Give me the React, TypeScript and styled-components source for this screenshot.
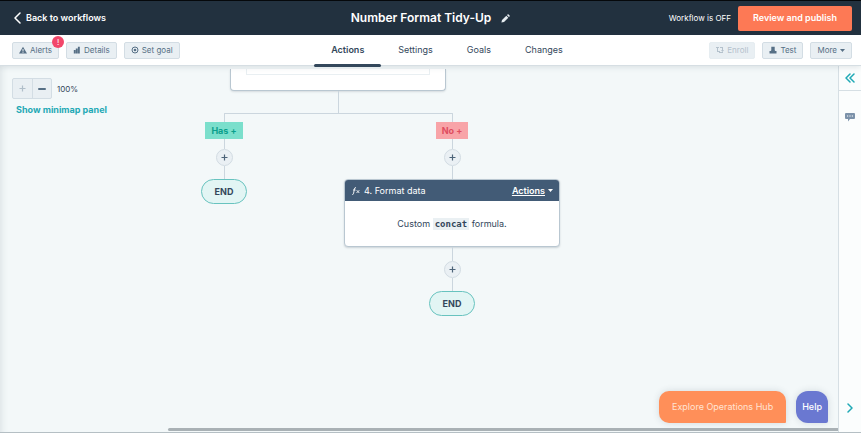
import React from "react";
import styled, { createGlobalStyle, css } from "styled-components";

const ink = "#33475b";
const line = "#cbd6de";
const teal = "#1fa9b5";

const GlobalStyle = createGlobalStyle`
  * { box-sizing: border-box; }
  body { margin: 0; }
  body, button {
    font-family: "Inter", "Liberation Sans", sans-serif;
    font-size: 8px;
    line-height: 12px;
    color: ${ink};
  }
  button {
    margin: 0;
    padding: 0;
    border: 0;
    background: none;
    white-space: nowrap;
  }
  a { color: inherit; text-decoration: none; }
  svg { display: block; flex: none; }
`;

const Page = styled.div`
  display: flex;
  flex-direction: column;
  height: 100vh;
  border-top: 1px solid #05080b;
  border-bottom: 1px solid #b5bfc4;
  overflow: hidden;
`;

const Header = styled.header`
  display: grid;
  grid-template-columns: 1fr auto 1fr;
  align-items: center;
  flex: none;
  height: 34px;
  padding: 0 9px 0 14px;
  background: #22313f;
  color: #fff;
`;

const BackLink = styled.a`
  display: flex;
  align-items: center;
  gap: 5px;
  font-size: 9px;
  font-weight: 600;
`;

const TitleGroup = styled.div`
  display: flex;
  align-items: center;
  gap: 10px;
  padding-right: 5px;
`;

const Title = styled.h1`
  margin: 0;
  font-size: 12px;
  line-height: 16px;
  font-weight: 600;
`;

const HeaderEnd = styled.div`
  display: flex;
  align-items: center;
  justify-content: flex-end;
  gap: 7px;
`;

const PublishButton = styled.button`
  height: 25px;
  padding: 0 15px;
  border-radius: 2px;
  background: #fd7955;
  color: #fff;
  font-size: 9px;
  font-weight: 600;
`;

const Toolbar = styled.div`
  display: grid;
  grid-template-columns: 1fr auto 1fr;
  flex: none;
  height: 31px;
  padding: 0 9px 0 12px;
  background: #fff;
  border-bottom: 1px solid #d6dee3;
  box-shadow: 0 1px 6px rgba(45, 62, 80, 0.14);
  z-index: 1;
`;

const ToolGroup = styled.div<{ $end?: boolean }>`
  display: flex;
  align-items: center;
  gap: 7px;
  justify-content: ${(p) => (p.$end ? "flex-end" : "flex-start")};
`;

const ToolButton = styled.button`
  position: relative;
  display: flex;
  align-items: center;
  gap: 3px;
  height: 17px;
  padding: 0 6px;
  border: 1px solid #d3dde4;
  border-radius: 2px;
  background: #e9eff3;
  color: #566f85;
  &:disabled { color: #b4c1cc; border-color: #e6edf1; }
`;

const AlertBadge = styled.span`
  position: absolute;
  top: -7px;
  right: -6px;
  width: 12px;
  height: 12px;
  border-radius: 50%;
  background: #f2476a;
  color: #fff;
  text-align: center;
`;

const Tabs = styled.nav`
  display: flex;
  padding-left: 30px;
`;

const Tab = styled.a<{ $active?: boolean }>`
  position: relative;
  display: flex;
  align-items: center;
  padding: 0 17px;
  font-size: 9px;
  ${(p) =>
    p.$active &&
    css`
      font-weight: 600;
      &::after {
        content: "";
        position: absolute;
        left: 0;
        right: 0;
        bottom: -2px;
        height: 3px;
        border-radius: 2px;
        background: ${ink};
      }
    `}
`;

const Body = styled.div`
  display: flex;
  flex: 1;
  min-height: 0;
`;

const Canvas = styled.main`
  position: relative;
  flex: 1;
  min-width: 0;
  overflow: hidden;
  background: #f3f8f9;
  box-shadow: inset 8px 0 8px -8px rgba(45, 62, 80, 0.16);
`;

const CanvasControls = styled.div`
  position: absolute;
  top: 12px;
  left: 12px;
`;

const ZoomRow = styled.div`
  display: flex;
  align-items: center;
  gap: 5px;
`;

const ZoomButtons = styled.div`
  display: flex;
  border: 1px solid #d3dde4;
  border-radius: 2px;
  background: #e9eff3;
`;

const ZoomButton = styled.button`
  display: grid;
  place-items: center;
  width: 19px;
  height: 19px;
  color: #566f85;
  &:disabled { color: #b0bec9; }
  & + & { border-left: 1px solid #d3dde4; }
`;

const MinimapButton = styled.button`
  margin: 5px 4px;
  color: ${teal};
  font-size: 9px;
  font-weight: 700;
`;

const Tree = styled.div`
  width: 456px;
  margin-left: 110px;
  padding-top: 3px;
  display: flex;
  flex-direction: column;
  align-items: center;
`;

const ParentCard = styled.section`
  width: 216px;
  height: 22px;
  padding: 0 15px;
  background: #fff;
  border: 1px solid #b9c7d1;
  border-top: 0;
  border-radius: 0 0 4px 4px;
  box-shadow: 0 1px 2px rgba(45, 62, 80, 0.15);
`;

const ParentField = styled.div`
  height: 6px;
  border: 1px solid #e9eff2;
  border-top: 0;
`;

const Stem = styled.div<{ $length: number }>`
  width: 1px;
  height: ${(p) => p.$length}px;
  background: ${line};
`;

const Fork = styled.div`
  width: 229px;
  height: 9px;
  border: 1px solid ${line};
  border-bottom: 0;
  border-radius: 1px 1px 0 0;
`;

const Branches = styled.div`
  display: grid;
  grid-template-columns: 1fr 1fr;
  width: 100%;
`;

const Branch = styled.div`
  display: flex;
  flex-direction: column;
  align-items: center;
`;

const BranchLabel = styled.button<{ $kind: "has" | "no" }>`
  height: 17px;
  padding: 0 6px;
  font-size: 9px;
  font-weight: 700;
  background: ${(p) => (p.$kind === "has" ? "#7bdfcc" : "#f8a4a8")};
  color: ${(p) => (p.$kind === "has" ? "#0ba08c" : "#df4d5f")};
`;

const AddButton = styled.button`
  display: grid;
  place-items: center;
  width: 17px;
  height: 17px;
  border: 1px solid #d2dce3;
  border-radius: 50%;
  background: #eaf0f4;
  color: #4d6479;
`;

const EndNode = styled.div`
  display: grid;
  place-items: center;
  width: 46px;
  height: 25px;
  border: 1px solid #68c3bf;
  border-radius: 13px;
  background: #e2f5f4;
  font-size: 9px;
  font-weight: 700;
`;

const ActionCard = styled.section`
  width: 216px;
  border: 1px solid #b9c7d1;
  border-radius: 4px;
  background: #fff;
  box-shadow: 0 1px 2px rgba(45, 62, 80, 0.2);
  overflow: hidden;
`;

const ActionHeader = styled.header`
  display: flex;
  align-items: center;
  height: 21px;
  padding: 0 6px 0 7px;
  gap: 4px;
  background: #425b76;
  color: #fff;
  font-size: 9px;
`;

const ActionTitle = styled.h2`
  flex: 1;
  margin: 0;
  font-size: 9px;
  font-weight: 400;
`;

const ActionsMenu = styled.button`
  display: flex;
  align-items: center;
  gap: 3px;
  color: #fff;
  font-size: 9px;
  font-weight: 600;
  span { text-decoration: underline; }
`;

const ActionBody = styled.p`
  margin: 0;
  padding: 16px 8px 15px;
  text-align: center;
  font-size: 9px;
  line-height: 13px;
`;

const Code = styled.code`
  padding: 1px 2px;
  background: #eaf0f3;
  font-family: "DejaVu Sans Mono", monospace;
  font-size: 9px;
  font-weight: 700;
`;

const Floating = styled.div`
  position: absolute;
  right: 10px;
  bottom: 9px;
  display: flex;
  gap: 10px;
`;

const FloatButton = styled.button<{ $help?: boolean }>`
  height: 32px;
  padding: 0 ${(p) => (p.$help ? 6 : 13)}px;
  border-radius: ${(p) => (p.$help ? "12px 12px 2px 12px" : "10px 10px 1px 10px")};
  background: ${(p) => (p.$help ? "#6a78d1" : "#ff8f59")};
  color: ${(p) => (p.$help ? "#fff" : "#ffe3d3")};
  box-shadow: 0 0 7px rgba(45, 62, 80, 0.16);
  font-size: 9px;
  font-weight: ${(p) => (p.$help ? 500 : 400)};
`;

const ScrollThumb = styled.div`
  position: absolute;
  left: 20%;
  right: 0;
  bottom: 1px;
  height: 3px;
  border-radius: 2px 0 0 2px;
  background: #a9b1b5;
`;

const Rail = styled.aside`
  display: flex;
  flex-direction: column;
  align-items: center;
  justify-content: space-between;
  width: 23px;
  flex: none;
  padding-bottom: 14px;
  border-left: 1px solid #d6dfe4;
  background: #fbfdfd;
`;

const RailTop = styled.div`
  align-self: stretch;
  display: flex;
  flex-direction: column;
  gap: 17px;
`;

const RailButton = styled.button<{ $ruled?: boolean }>`
  display: grid;
  place-items: center;
  padding: 5px;
  color: ${teal};
  ${(p) =>
    p.$ruled &&
    css`
      height: 25px;
      border-bottom: 1px solid #d6dfe4;
    `}
`;

const Chevron = ({ w = 6, h = 10, d = "M5 1 1 5l4 4", stroke = 1.5 }) => (
  <svg width={w} height={h} viewBox={`0 0 ${w} ${h}`} fill="none" stroke="currentColor" strokeWidth={stroke} strokeLinecap="round" strokeLinejoin="round" aria-hidden="true">
    <path d={d} />
  </svg>
);

const Plus = () => (
  <svg width="7" height="7" viewBox="0 0 7 7" stroke="currentColor" strokeWidth="1.2" aria-hidden="true">
    <path d="M3.5 .5v6M.5 3.5h6" />
  </svg>
);

const Caret = () => (
  <svg width="5" height="3" viewBox="0 0 5 3" fill="currentColor" aria-hidden="true">
    <path d="M0 0h5L2.5 3z" />
  </svg>
);

const Glyph = ({ children }: { children: React.ReactNode }) => (
  <svg width="8" height="8" viewBox="0 0 8 8" fill="currentColor" aria-hidden="true">
    {children}
  </svg>
);

const AddStep = () => (
  <AddButton aria-label="Add action">
    <Plus />
  </AddButton>
);

export default function App() {
  return (
    <>
      <GlobalStyle />
      <Page>
        <Header>
          <BackLink href="#workflows">
            <Chevron w={7} h={12} d="M6 1 1 6l5 5" />
            Back to workflows
          </BackLink>
          <TitleGroup>
            <Title>Number Format Tidy-Up</Title>
            <button aria-label="Rename workflow">
              <svg width="9" height="9" viewBox="0 0 9 9" fill="#e6ecf0" aria-hidden="true">
                <path d="M.4 8.6 1 6l4.3-4.3 2 2L3 8zM5.9 1.1l.7-.7q.5-.4 1 0l1 1q.4.5 0 1l-.7.7z" />
              </svg>
            </button>
          </TitleGroup>
          <HeaderEnd>
            <span>Workflow is OFF</span>
            <PublishButton>Review and publish</PublishButton>
          </HeaderEnd>
        </Header>

        <Toolbar>
          <ToolGroup>
            <ToolButton>
              <Glyph><path fillRule="evenodd" d="M4 .7 8 7.5H0zM3.5 3v2.2h1V3zm0 2.8v.9h1v-.9z" /></Glyph>
              Alerts
              <AlertBadge>!</AlertBadge>
            </ToolButton>
            <ToolButton>
              <Glyph><path d="M.8 4h1.800v3.500H.8zM2.800 2.500h1.900v5H2.800zM4.900 .8h1.900v6.700H4.900z" /></Glyph>
              Details
            </ToolButton>
            <ToolButton>
              <Glyph>
                <circle cx="4" cy="4" r="3" fill="none" stroke="currentColor" />
                <circle cx="4" cy="4" r="1.3" />
              </Glyph>
              Set goal
            </ToolButton>
          </ToolGroup>
          <Tabs>
            <Tab href="#actions" $active aria-current="page">Actions</Tab>
            <Tab href="#settings">Settings</Tab>
            <Tab href="#goals">Goals</Tab>
            <Tab href="#changes">Changes</Tab>
          </Tabs>
          <ToolGroup $end>
            <ToolButton disabled>
              <Glyph><path d="M0 1h3v1H2v3h2v1H1V2H0zM4 1h3v3h1L6.5 6 5 4h1V2H4zM3 6h4v1H3z" /></Glyph>
              Enroll
            </ToolButton>
            <ToolButton>
              <Glyph><path d="M2.300 .8h3.400v3.400l.6.8H7.500v2.400H.5V5h1.200l.6-.8z" /></Glyph>
              Test
            </ToolButton>
            <ToolButton>
              More
              <Caret />
            </ToolButton>
          </ToolGroup>
        </Toolbar>

        <Body>
          <Canvas>
            <Tree>
              <ParentCard>
                <ParentField />
              </ParentCard>
              <Stem $length={22} />
              <Fork />
              <Branches>
                <Branch>
                  <BranchLabel $kind="has">Has +</BranchLabel>
                  <Stem $length={10} />
                  <AddStep />
                  <Stem $length={13} />
                  <EndNode>END</EndNode>
                </Branch>
                <Branch>
                  <BranchLabel $kind="no">No +</BranchLabel>
                  <Stem $length={10} />
                  <AddStep />
                  <Stem $length={13} />
                  <ActionCard>
                    <ActionHeader>
                      <svg width="8" height="8" viewBox="0 0 8 8" fill="none" stroke="currentColor" strokeWidth=".9" aria-hidden="true">
                        <path d="M.3 7.5q1 .2 1.3-1.3L2.4 2Q2.7 .3 4 .7M1 3h2.6M4.700 3.2 7.3 6M7.3 3.2 4.5 6" />
                      </svg>
                      <ActionTitle>4. Format data</ActionTitle>
                      <ActionsMenu>
                        <span>Actions</span>
                        <Caret />
                      </ActionsMenu>
                    </ActionHeader>
                    <ActionBody>
                      Custom <Code>concat</Code> formula.
                    </ActionBody>
                  </ActionCard>
                  <Stem $length={14} />
                  <AddStep />
                  <Stem $length={13} />
                  <EndNode>END</EndNode>
                </Branch>
              </Branches>
            </Tree>

            <CanvasControls>
              <ZoomRow>
                <ZoomButtons>
                  <ZoomButton disabled aria-label="Zoom in"><Plus /></ZoomButton>
                  <ZoomButton aria-label="Zoom out">
                    <svg width="8" height="2" viewBox="0 0 8 2" fill="currentColor" aria-hidden="true"><rect width="8" height="2" rx="1" /></svg>
                  </ZoomButton>
                </ZoomButtons>
                <span>100%</span>
              </ZoomRow>
              <MinimapButton>Show minimap panel</MinimapButton>
            </CanvasControls>

            <Floating>
              <FloatButton>Explore Operations Hub</FloatButton>
              <FloatButton $help>Help</FloatButton>
            </Floating>
            <ScrollThumb />
          </Canvas>
          <Rail>
            <RailTop>
              <RailButton $ruled aria-label="Expand panel">
                <Chevron w={10} h={10} d="M5 1 1 5l4 4M9 1 5 5l4 4" />
              </RailButton>
              <RailButton aria-label="Comments">
                <svg width="10" height="9" viewBox="0 0 10 9" aria-hidden="true">
                  <path d="M1 0h8q1 0 1 1v4q0 1-1 1H5L3 8.5V6H1Q0 6 0 5V1q0-1 1-1z" fill="#7c92aa" />
                  <path d="M2 3h1.2M4.4 3h1.2M6.8 3H8" stroke="#fff" />
                </svg>
              </RailButton>
            </RailTop>
            <RailButton aria-label="Next">
              <Chevron w={6} h={10} d="M1 1l4 4-4 4" />
            </RailButton>
          </Rail>
        </Body>
      </Page>
    </>
  );
}
